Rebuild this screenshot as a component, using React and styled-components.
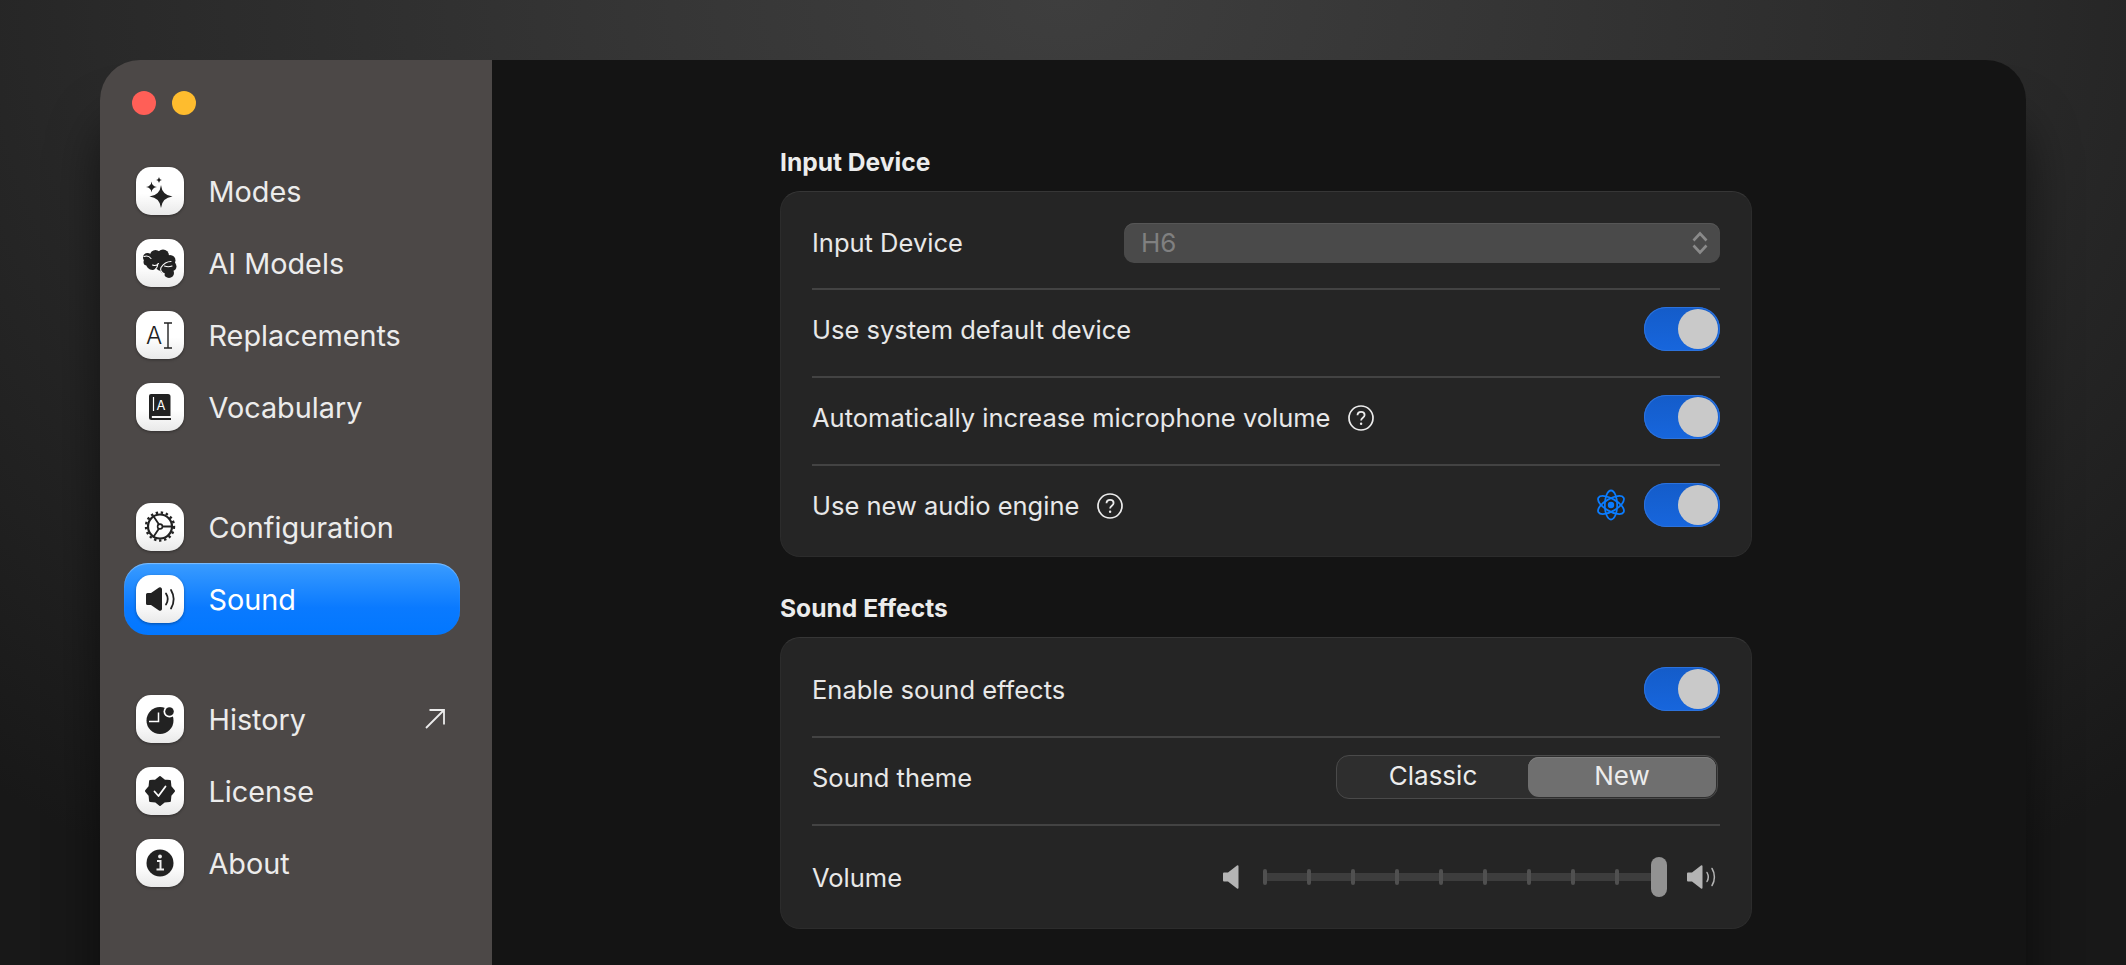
import React from 'react';
import styled, { createGlobalStyle } from 'styled-components';

const Global = createGlobalStyle`
    html, body {
        margin: 0;
        height: 100%;
        overflow: hidden;
        background: #161616;
    }
    * { box-sizing: border-box; }
`;

const Desktop = styled.div`
    height: 965px;
    overflow: hidden;
    padding: 60px 100px 0;
    font-family: Inter, "Liberation Sans", sans-serif;
    background: radial-gradient(ellipse 1560px 1080px at 50% 0, #3e3e3e 0%, #363636 25%, #292929 62%, #181818 100%);
`;

const Window = styled.div`
    display: flex;
    height: 960px;
    border-radius: 40px 40px 0 0;
    overflow: hidden;
    box-shadow: 0 60px 50px rgba(0,0,0,0.55);
`;

const Sidebar = styled.aside`
    width: 392px;
    flex-shrink: 0;
    background: #4c4847;
    padding: 31px 32px 0 24px;
`;

const Lights = styled.div`
    display: flex;
    gap: 16px;
    padding-left: 8px;
    margin-bottom: 40px;
`;

const Light = styled.span`
    width: 24px;
    height: 24px;
    border-radius: 50%;
    background: ${p => p.$color};
`;

const NavGroup = styled.div`
    margin-bottom: 48px;
`;

const NavItem = styled.div`
    display: flex;
    align-items: center;
    gap: 24.500px;
    height: 72px;
    padding: 0 15px 0 12px;
    border-radius: 24px;
    font-size: 28.800px;
    color: ${p => (p.$active ? '#fff' : '#ececec')};
    background: ${p => (p.$active ? 'linear-gradient(180deg, #3a9cff 0%, #0a7aff 62%, #0277ff 100%)' : 'none')};
    box-shadow: ${p => (p.$active ? 'inset 0 1px 1px rgba(255,255,255,0.35)' : 'none')};
`;

const NavLabel = styled.span`
    flex: 1;
    padding-top: 1px;
`;

const Tile = styled.span`
    display: flex;
    width: 48px;
    height: 48px;
    flex-shrink: 0;
    border-radius: 15px;
    background: linear-gradient(180deg, #ffffff 0%, #ffffff 55%, #e9e9e9 100%);
    box-shadow: 0 1px 3px rgba(0,0,0,0.35);
`;

const Main = styled.main`
    flex: 1;
    background: #141414;
    padding: 87px 0 0 288px;
`;

const Section = styled.section`
    width: 972px;
    margin-bottom: 36px;
`;

const Heading = styled.h2`
    margin: 0 0 14px;
    font-size: 24.600px;
    line-height: 30px;
    font-weight: 700;
    color: #ececec;
`;

const Card = styled.div`
    padding: 12px 31px 4px;
    background: #252525;
    border: 1px solid #2c2c2c;
    border-top-color: #363636;
    border-radius: 20px;
`;

const Row = styled.div`
    display: flex;
    align-items: center;
    justify-content: space-between;
    min-height: 88px;
    padding: 17px 0 25px;
    border-bottom: 2px solid #434343;

    &:first-child {
        min-height: 86px;
    }

    &:last-child {
        min-height: 86px;
        border-bottom: none;
    }
`;

const TallRow = styled(Row)`
    padding-top: 29px;

    &:last-child {
        min-height: 98px;
    }
`;

const Label = styled.div`
    display: flex;
    align-items: center;
    gap: 18px;
    padding-top: 1px;
    font-size: 25.500px;
    color: #e8e8e8;
`;

const Controls = styled.div`
    display: flex;
    align-items: center;
    gap: 18px;
`;

const Select = styled.div`
    display: flex;
    align-items: center;
    justify-content: space-between;
    width: 596px;
    height: 40px;
    margin-top: 1px;
    padding: 0 12px 0 17px;
    border-radius: 10px;
    background: #4a4a4a;
    box-shadow: inset 0 1px 0 #565656;
    font-size: 26px;
    color: #808080;
`;

const Switch = styled.span`
    display: flex;
    justify-content: flex-end;
    align-items: center;
    width: 76px;
    height: 44px;
    padding: 0 2px;
    border-radius: 22px;
    background: linear-gradient(180deg, #145cc9 0%, #1766dd 100%);
    box-shadow: inset 0 0 0 1px #2c72dc;

    &::after {
        content: '';
        width: 40px;
        height: 40px;
        border-radius: 50%;
        background: #c9c9c9;
    }
`;

const Segmented = styled.div`
    display: flex;
    width: 382px;
    height: 44px;
    margin-right: 2px;
    padding: 1px;
    border: 1px solid #4a4a4a;
    border-radius: 13px;
    background: #2e2e2e;
`;

const Segment = styled.span`
    flex: ${p => (p.$on ? '0 0 188px' : '1')};
    display: flex;
    align-items: center;
    justify-content: center;
    padding-bottom: 3px;
    border-radius: 11px;
    font-size: 26px;
    color: #ececec;
    background: ${p => (p.$on ? '#6f6f6f' : 'none')};
    box-shadow: ${p => (p.$on ? 'inset 0 1px 0 #7d7d7d' : 'none')};
`;

const Slider = styled.div`
    display: flex;
    align-items: center;
    margin-right: 3px;
`;

const Track = styled.div`
    position: relative;
    display: flex;
    align-items: center;
    justify-content: space-between;
    width: 404px;
    height: 8px;
    margin: 0 20px 0 24px;
    padding-right: 4px;
    background: #3d3d3d;
    border-radius: 2px;
`;

const Tick = styled.span`
    width: 4px;
    height: 16px;
    border-radius: 2px;
    background: #505050;
`;

const Thumb = styled.span`
    position: absolute;
    right: 0;
    top: -16px;
    width: 16px;
    height: 40px;
    border-radius: 8px;
    background: #929292;
`;

const Svg = ({ size = 48, w, h, children, ...rest }) => (
    <svg width={w || size} height={h || size} viewBox={`0 0 ${w || size} ${h || size}`} fill="none" {...rest}>
        {children}
    </svg>
);

const INK = '#222';

const star = (cx, cy, r) => {
    const k = r * 0.16;
    return `M${cx} ${cy - r}Q${cx + k * 0.6} ${cy - k * 0.6} ${cx + r} ${cy}Q${cx + k * 0.6} ${cy + k * 0.6} ${cx} ${cy + r}Q${cx - k * 0.6} ${cy + k * 0.6} ${cx - r} ${cy}Q${cx - k * 0.6} ${cy - k * 0.6} ${cx} ${cy - r}Z`;
};

const SparkIcon = () => (
    <Svg>
        <path d={star(25, 29.5, 11.5)} fill={INK} />
        <path d={star(15.5, 20, 5.5)} fill={INK} />
        <path d={star(23, 13, 3.2)} fill={INK} />
    </Svg>
);

const BrainIcon = () => (
    <Svg>
        <g fill={INK}>
            <circle cx="11.5" cy="18.5" r="4.500" />
            <circle cx="11" cy="23" r="3.500" />
            <circle cx="19.500" cy="16.500" r="5.500" />
            <circle cx="27" cy="16.500" r="6" />
            <circle cx="34" cy="21.500" r="5.500" />
            <circle cx="36" cy="27.500" r="4.500" />
            <circle cx="26" cy="24" r="8" />
            <circle cx="16.500" cy="24.500" r="6.500" />
            <circle cx="33" cy="34" r="5" />
            <circle cx="29" cy="30" r="5" />
        </g>
        <path d="M8 17.500c3-1 5.500 0 7 2M16.500 26c2.500 1 4.500.5 6-1.500M22 24.500c0 3-1.500 5-3.500 7M35 22.500c-5 0-8 3-10 6-1 2 0 5 3.500 6.500M28.500 27c2.500 1 5 1 7.500 0" stroke="#fff" strokeWidth="1.100" strokeLinecap="round" />
    </Svg>
);

const GlyphA = styled.text`
    font-family: Inter, "Liberation Sans", sans-serif;
`;

const TextCursorIcon = () => (
    <Svg>
        <GlyphA x="10" y="33" fontSize="24" fontWeight="300" fill={INK}>A</GlyphA>
        <path d="M28 12h8M32 12v25M28 37h8" stroke={INK} strokeWidth="1.400" />
    </Svg>
);

const BookIcon = () => (
    <Svg>
        <path d="M15 11h17a2.500 2.500 0 0 1 2.500 2.500V33H16a2 2 0 0 0 0 2h19v2H15.500a2.500 2.500 0 0 1-2.500-2.500V13a2 2 0 0 1 2-2z" fill={INK} />
        <path d="M17.500 14v14" stroke="#fff" strokeWidth="1.200" />
        <GlyphA x="20.500" y="27" fontSize="13" fill="#fff">A</GlyphA>
    </Svg>
);

const GearIcon = () => (
    <Svg>
        <circle cx="24" cy="23.500" r="12" stroke={INK} strokeWidth="2.200" />
        <circle cx="24" cy="23.500" r="14" stroke={INK} strokeWidth="2.400" strokeDasharray="2.400 2.700" />
        <circle cx="24" cy="23.500" r="2.400" stroke={INK} strokeWidth="1.600" />
        <path d="M26 23.500h10M23 25.500l-6 9M23 21.500l-6-9" stroke={INK} strokeWidth="1.800" />
    </Svg>
);

const SpeakerIcon = () => (
    <Svg>
        <path d="M10 19.500a1.500 1.500 0 0 1 1.500-1.500H15l8-5.500a2 2 0 0 1 3 1.500v20a2 2 0 0 1-3 1.500L15 30h-3.500a1.500 1.500 0 0 1-1.500-1.500z" fill={INK} />
        <path d="M30 18.500c2.200 3.500 2.200 7.500 0 11M35 15c3.500 6 3.500 12.500 0 18.500" stroke={INK} strokeWidth="1.800" strokeLinecap="round" />
    </Svg>
);

const HistoryIcon = () => (
    <Svg>
        <circle cx="24" cy="25.500" r="13.500" fill={INK} />
        <path d="M22.500 17.500V26.500H13" stroke="#fff" strokeWidth="1.500" />
        <circle cx="33.500" cy="16.500" r="6" fill="#fff" />
        <circle cx="33.500" cy="16.500" r="4.300" fill={INK} />
    </Svg>
);

// eight-lobed seal, points worked out once
const sealPoints = Array.from({ length: 16 }, (_, i) => {
    const a = (i * Math.PI) / 8 - Math.PI / 2;
    const r = i % 2 ? 11.300 : 14;
    return `${(24 + r * Math.cos(a)).toFixed(2)},${(24 + r * Math.sin(a)).toFixed(2)}`;
}).join(' ');

const BadgeIcon = () => (
    <Svg>
        <polygon points={sealPoints} fill={INK} stroke={INK} strokeWidth="2" strokeLinejoin="round" />
        <path d="M18.500 24.500l4 4.500 7-9.500" stroke="#fff" strokeWidth="1.800" strokeLinecap="round" strokeLinejoin="round" />
    </Svg>
);

const InfoIcon = () => (
    <Svg>
        <circle cx="24" cy="24" r="13.500" fill={INK} />
        <circle cx="24" cy="17.500" r="1.900" fill="#eee" />
        <path d="M21 22h3.500v8M20.500 30.500h7.500" stroke="#eee" strokeWidth="2" />
    </Svg>
);

const ArrowIcon = () => (
    <Svg w={20} h={20}>
        <path d="M1 19L19 1M4.500 1H19v14.500" stroke="#ececec" strokeWidth="1.800" />
    </Svg>
);

const HelpIcon = () => (
    <Svg size={26}>
        <circle cx="13" cy="13" r="12" stroke="#ececec" strokeWidth="1.700" />
        <path d="M9.500 10.300c0-2.200 1.600-3.500 3.600-3.500s3.500 1.200 3.500 3.100c0 2.800-3.500 2.800-3.500 5.600" stroke="#ececec" strokeWidth="1.800" />
        <circle cx="13.100" cy="18.800" r="1.200" fill="#ececec" />
    </Svg>
);

const Chevrons = () => (
    <Svg w={16} h={24}>
        <path d="M1.500 9.500L8 2.500l6.500 7M1.500 14.500L8 21.500l6.500-7" stroke="#8a8a8a" strokeWidth="2.600" />
    </Svg>
);

const AtomIcon = () => (
    <Svg w={30} h={32}>
        <g stroke="#0a7cff" strokeWidth="1.800">
            <ellipse cx="15" cy="16" rx="6.200" ry="14.500" />
            <ellipse cx="15" cy="16" rx="6.200" ry="14.500" transform="rotate(60 15 16)" />
            <ellipse cx="15" cy="16" rx="6.200" ry="14.500" transform="rotate(120 15 16)" />
        </g>
        <circle cx="15" cy="16" r="3.200" fill="#0a7cff" />
    </Svg>
);

const VolumeLow = () => (
    <Svg w={16} h={24}>
        <path d="M0 8.500a1 1 0 0 1 1-1h4L14 .5a1 1 0 0 1 1.500.800v21.400a1 1 0 0 1-1.500.800L5 16.500H1a1 1 0 0 1-1-1z" fill="#b4b4b4" />
    </Svg>
);

const VolumeHigh = () => (
    <Svg w={30} h={24}>
        <path d="M0 8.500a1 1 0 0 1 1-1h4L14 .5a1 1 0 0 1 1.500.800v21.400a1 1 0 0 1-1.500.800L5 16.500H1a1 1 0 0 1-1-1z" fill="#b4b4b4" />
        <path d="M20 7.500c1.600 2.800 1.600 6.200 0 9M25 3.500c3.200 5 3.200 12 0 17" stroke="#b4b4b4" strokeWidth="1.500" strokeLinecap="round" />
    </Svg>
);

const navGroups = [
    [
        { label: 'Modes', Icon: SparkIcon },
        { label: 'AI Models', Icon: BrainIcon },
        { label: 'Replacements', Icon: TextCursorIcon },
        { label: 'Vocabulary', Icon: BookIcon },
    ],
    [
        { label: 'Configuration', Icon: GearIcon },
        { label: 'Sound', Icon: SpeakerIcon, active: true },
    ],
    [
        { label: 'History', Icon: HistoryIcon, external: true },
        { label: 'License', Icon: BadgeIcon },
        { label: 'About', Icon: InfoIcon },
    ],
];

const App = () => (
    <>
        <Global />
        <Desktop>
            <Window>
                <Sidebar>
                    <Lights>
                        <Light $color="#ff5f57" />
                        <Light $color="#febc2e" />
                    </Lights>
                    {navGroups.map((group, i) => (
                        <NavGroup key={i}>
                            {group.map(({ label, Icon, active, external }) => (
                                <NavItem key={label} $active={active}>
                                    <Tile><Icon /></Tile>
                                    <NavLabel>{label}</NavLabel>
                                    {external && <ArrowIcon />}
                                </NavItem>
                            ))}
                        </NavGroup>
                    ))}
                </Sidebar>
                <Main>
                    <Section>
                        <Heading>Input Device</Heading>
                        <Card>
                            <Row>
                                <Label>Input Device</Label>
                                <Select>H6<Chevrons /></Select>
                            </Row>
                            <Row>
                                <Label>Use system default device</Label>
                                <Switch />
                            </Row>
                            <Row>
                                <Label>Automatically increase microphone volume <HelpIcon /></Label>
                                <Switch />
                            </Row>
                            <Row>
                                <Label>Use new audio engine <HelpIcon /></Label>
                                <Controls><AtomIcon /><Switch /></Controls>
                            </Row>
                        </Card>
                    </Section>
                    <Section>
                        <Heading>Sound Effects</Heading>
                        <Card>
                            <Row>
                                <Label>Enable sound effects</Label>
                                <Switch />
                            </Row>
                            <Row>
                                <Label>Sound theme</Label>
                                <Segmented>
                                    <Segment>Classic</Segment>
                                    <Segment $on>New</Segment>
                                </Segmented>
                            </Row>
                            <TallRow>
                                <Label>Volume</Label>
                                <Slider>
                                    <VolumeLow />
                                    <Track>
                                        {Array.from({ length: 10 }, (_, i) => <Tick key={i} />)}
                                        <Thumb />
                                    </Track>
                                    <VolumeHigh />
                                </Slider>
                            </TallRow>
                        </Card>
                    </Section>
                </Main>
            </Window>
        </Desktop>
    </>
);

export default App;
